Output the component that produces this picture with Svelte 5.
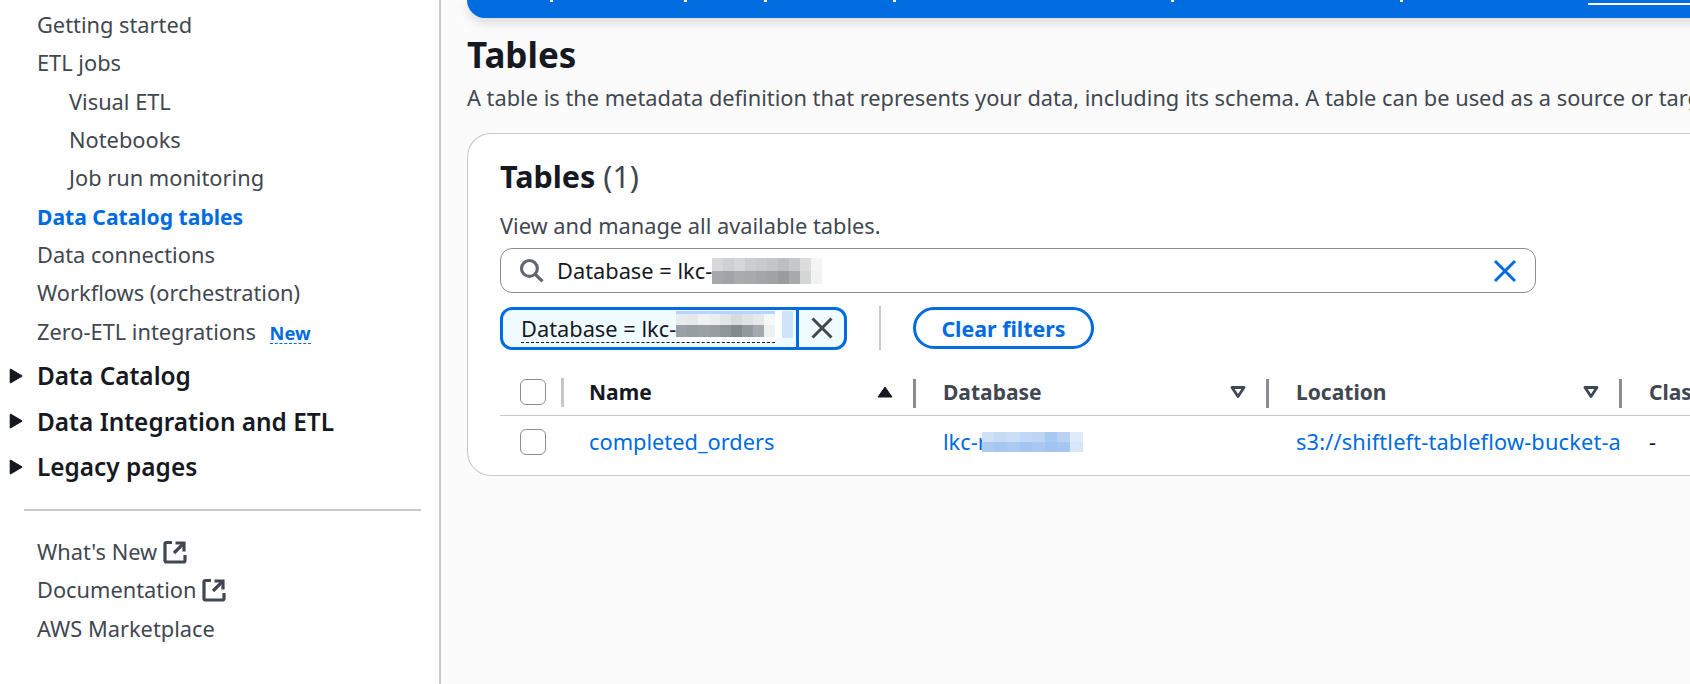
<script>
  const navTop = ['Getting started', 'ETL jobs'];
  const navSub = ['Visual ETL', 'Notebooks', 'Job run monitoring'];
  const groups = ['Data Catalog', 'Data Integration and ETL', 'Legacy pages'];
  const specks = [550, 684, 764, 893, 1171, 1400].map((x) => x - 467);
  const top = ['#d8d8da','#cfd0d2','#d6d6d8','#cdcecf','#c9cacc','#c4c5c7','#bdbec0','#c6c7c9','#dcdcdd','#f4f4f5'];
  const low = ['#a6a7a9','#a2a3a6','#a9aaac','#a8a9ab','#a4a5a7','#a1a2a4','#9a9b9e','#a8a9ab','#d4d5d6','#f2f2f3'];
  const tTop = ['#e8ebec','#e6e9ea','#eff1f2','#ebedee','#e2e5e6','#d8dbdc','#dfe2e3','#e6e8e9','#f6f7f7'];
  const tLow = ['#9aa1a6','#969da2','#9aa1a6','#979ea3','#8f969b','#828a8f','#939a9f','#a3a9ad','#eef1f2'];
  const lTop = ['#cfe0f7','#c6dbf6','#cbdef6','#c0d7f5','#bdd5f5','#a9c9f2','#b9d2f4','#dfeafa'];
  const lLow = ['#abcaf1','#a6c7f1','#abcaf1','#a3c5f0','#a7c8f1','#a0c3f0','#a4c6f0','#d9e6f9'];
</script>

<div class="page">
  <aside class="side">
    <nav class="nav">
      {#each navTop as t}<a class="item">{t}</a>{/each}
      {#each navSub as t}<a class="item sub">{t}</a>{/each}
      <a class="item active">Data Catalog tables</a>
      <a class="item">Data connections</a>
      <a class="item">Workflows (orchestration)</a>
      <a class="item">Zero-ETL integrations <span class="new">New</span></a>
    </nav>
    <div class="groups">
      {#each groups as g}
        <div class="group">
          <svg class="caret" viewBox="0 0 14 16" width="14" height="16"><path d="M1.5 1.5 L12.5 8 L1.5 14.5 Z" fill="#16191f" stroke="#16191f" stroke-width="1.6" stroke-linejoin="round"/></svg>
          <span>{g}</span>
        </div>
      {/each}
    </div>
    <hr class="rule" />
    <nav class="nav foot">
      <a class="item">What's New <svg class="ext" viewBox="0 0 24 24" width="24" height="24"><path d="M9 2.5H3.5Q2 2.500 2 4V20.500Q2 22 3.500 22H20.500Q22 22 22 20.500V15" fill="none" stroke="#414750" stroke-width="3.200"/><path d="M12.500 3H21V11.500" fill="none" stroke="#414750" stroke-width="3.200"/><path d="M20.500 3.500L11 13" fill="none" stroke="#414750" stroke-width="3.200"/></svg></a>
      <a class="item">Documentation <svg class="ext" viewBox="0 0 24 24" width="24" height="24"><path d="M9 2.5H3.5Q2 2.500 2 4V20.500Q2 22 3.500 22H20.500Q22 22 22 20.500V15" fill="none" stroke="#414750" stroke-width="3.200"/><path d="M12.500 3H21V11.500" fill="none" stroke="#414750" stroke-width="3.200"/><path d="M20.500 3.500L11 13" fill="none" stroke="#414750" stroke-width="3.200"/></svg></a>
      <a class="item">AWS Marketplace</a>
    </nav>
  </aside>

  <main class="main">
    <div class="banner">
      {#each specks as s}<span class="speck" style="left:{s}px"></span>{/each}
      <span class="banner-link"></span>
    </div>
    <h1>Tables</h1>
    <p class="desc">A table is the metadata definition that represents your data, including its schema. A table can be used as a source or target in a job definition.</p>

    <section class="card">
      <h2>Tables <span class="count">(1)</span></h2>
      <p class="sub-desc">View and manage all available tables.</p>

      <div class="search">
        <svg viewBox="0 0 24 24" width="25" height="25"><circle cx="10" cy="10" r="7.6" fill="none" stroke="#5f6670" stroke-width="3"/><path d="M15.5 15.5L22.5 22.500" stroke="#5f6670" stroke-width="3.200" fill="none"/></svg>
        <span class="search-text">Database = lkc-</span>
        <span class="blur">{#each top as c, i}<i style="background:linear-gradient({c} 50%, {low[i]} 50%)"></i>{/each}</span>
        <svg class="clear" viewBox="0 0 24 24" width="24" height="24"><path d="M2 2L22 22M22 2L2 22" stroke="#006ce0" stroke-width="3" fill="none"/></svg>
      </div>

      <div class="filters">
        <div class="token">
          <span class="token-text">
            <span class="token-label">
              <span class="token-word">Database = lkc-</span>
              <span class="blur small">{#each tTop as c, i}<i style="background:linear-gradient(#b5d6f8 3px, {c} 3px, {c} 14px, {tLow[i]} 14px, {tLow[i]} 26px, #fff 26px)"></i>{/each}</span>
            </span>
            <span class="sel-end"></span>
          </span>
          <button class="token-x" aria-label="Remove"><svg viewBox="0 0 24 24" width="24" height="24"><path d="M2.500 2.500L21.500 21.500M21.500 2.500L2.500 21.500" stroke="#414750" stroke-width="3" fill="none"/></svg></button>
        </div>
        <div class="vsep"></div>
        <button class="clear-btn">Clear filters</button>
      </div>

      <div class="table">
        <div class="row head">
          <div class="c-check"><span class="box"></span><span class="light-div"></span></div>
          <div class="c-name">
            <span class="th dark">Name</span>
            <svg viewBox="0 0 16 12" width="16" height="12"><path d="M8 1L15 11H1Z" fill="#16191f" stroke="#16191f" stroke-linejoin="round"/></svg>
            <span class="div"></span>
          </div>
          <div class="c-db">
            <span class="th">Database</span>
            <svg viewBox="0 0 16 12" width="16" height="12"><path d="M2 1.500H14L8 10.500Z" fill="none" stroke="#414750" stroke-width="2.800" stroke-linejoin="round"/></svg>
            <span class="div"></span>
          </div>
          <div class="c-loc">
            <span class="th">Location</span>
            <svg viewBox="0 0 16 12" width="16" height="12"><path d="M2 1.500H14L8 10.500Z" fill="none" stroke="#414750" stroke-width="2.800" stroke-linejoin="round"/></svg>
            <span class="div"></span>
          </div>
          <div class="c-cls"><span class="th">Classification</span></div>
        </div>
        <div class="row body">
          <div class="c-check"><span class="box"></span></div>
          <div class="c-name"><a class="link">completed_orders</a></div>
          <div class="c-db"><a class="link">lkc-r</a><span class="blur link-blur">{#each lTop as c, i}<i style="background:linear-gradient({c} 50%, {lLow[i]} 50%)"></i>{/each}</span></div>
          <div class="c-loc"><a class="link clip">s3://shiftleft-tableflow-bucket-a</a></div>
          <div class="c-cls dash">-</div>
        </div>
      </div>
    </section>
  </main>
</div>

<style>
  :global(body) { margin: 0; background: #fbfbfb; overflow: hidden; }
  * { box-sizing: border-box; }
  .page { display: flex; width: 1690px; height: 684px; overflow: hidden; font-family: "Noto Sans", sans-serif; font-size: 21.8px; color: #414750; }
  .side { width: 441px; flex: none; height: 684px; background: #fff; border-right: 2px solid #c6c6cd; padding-top: 5.5px; }
  .nav { display: flex; flex-direction: column; }
  .item { display: flex; align-items: center; height: 38.33px; padding-left: 37px; color: #414750; white-space: pre; }
  .sub { padding-left: 69px; }
  .active { color: #006ce0; font-weight: 700; font-size: 21.1px; }
  .new { color: #006ce0; font-weight: 700; font-size: 18.300px; margin-left: 8px; border-bottom: 1px dashed #006ce0; line-height: 20px; margin-top: 5px; }
  .groups { margin-top: 2.5px; }
  .group { display: flex; align-items: center; height: 45.5px; color: #16191f; font-weight: 600; font-size: 24.4px; padding-left: 9px; }
  .group span { margin-left: 14px; }
  .rule { border: 0; border-top: 2px solid #c6c6cd; margin: 20px 18px 0 24px; }
  .foot { margin-top: 21px; }
  .ext { margin-left: 0; }

  .main { flex: 1; min-width: 0; padding-left: 26px; position: relative; }
  .banner { height: 18px; width: 1300px; background: #006ce0; border-bottom-left-radius: 18px; box-shadow: 0 4px 12px rgba(0,7,22,.15); position: relative; }
  .banner-link { position: absolute; left: 1121px; top: 3px; width: 110px; height: 2px; background: #fff; }
  .speck { position: absolute; top: 0; width: 3px; height: 2px; background: #fff; }
  h1 { margin: 15px 0 0; color: #16191f; font-size: 35px; font-weight: 700; line-height: 44px; }
  .desc { margin: 6px 0 0; white-space: nowrap; line-height: 30px; }
  .card { margin-top: 20px; width: 1300px; height: 343px; background: #fff; border: 1px solid #c6c6cd; border-right: 0; border-radius: 24px 0 0 24px; padding: 24px 0 0 32px; }
  h2 { margin: 0; font-size: 30.5px; font-weight: 700; color: #16191f; line-height: 36px; }
  .count { font-weight: 400; color: #414750; }
  .sub-desc { margin: 17px 0 0; line-height: 30px; }
  .search { display: flex; align-items: center; width: 1036px; height: 45px; margin-top: 7px; border: 1.5px solid #8c8c94; border-radius: 12px; padding: 0 18px 0 18px; color: #16191f; }
  .search-text { margin-left: 13px; }
  .blur { display: inline-flex; height: 26px; }
  .blur i { width: 11px; display: block; }
  .clear { margin-left: auto; }
  .filters { display: flex; align-items: center; margin-top: 13px; }
  .token { display: flex; align-items: stretch; width: 347px; height: 43px; background: #f0fbff; border: 3px solid #006ce0; border-radius: 12px; color: #16191f; }
  .token-text { flex: 1; min-width: 0; display: flex; align-items: flex-start; padding: 1px 0 0 18px; white-space: nowrap; overflow: hidden; }
  .token-label { display: inline-flex; align-items: flex-end; height: 32px; border-bottom: 1px dashed #16191f; }
  .token-word { line-height: 26px; }
  .blur.small { height: 31px; align-self: flex-start; }
  .blur.small i { width: 11px; }
  .sel-end { width: 18px; height: 27px; flex: none; background: linear-gradient(90deg, #fff 40%, #cfe4fb 40%); }
  .token-x { width: 48px; flex: none; padding: 0; border: 0; border-left: 3px solid #006ce0; background: transparent; display: flex; align-items: center; justify-content: center; }
  .vsep { width: 2px; height: 44px; background: #c6c6cd; margin: 0 32px; }
  .clear-btn { width: 181px; height: 42px; border: 3px solid #006ce0; border-radius: 21px; background: #fff; color: #006ce0; font: 700 21.4px "Noto Sans", sans-serif; padding: 0; }
  .table { margin-top: 22px; }
  .row { display: flex; align-items: center; }
  .head { height: 44px; border-bottom: 1.5px solid #c6c6cd; }
  .body { height: 59px; padding-bottom: 8px; }
  .head > div { display: flex; align-items: center; height: 100%; padding-bottom: 3px; }
  .c-check { width: 89px; padding-left: 20px; display: flex; align-items: center; flex: none; }
  .box { width: 26px; height: 26px; border: 1.5px solid #8c8c94; border-radius: 6px; background: #fff; flex: none; display: block; }
  .light-div { width: 2.5px; height: 29px; background: #c6c6cd; margin-left: 15px; }
  .c-name { width: 354px; flex: none; }
  .c-db { width: 353px; flex: none; }
  .c-loc { width: 353px; flex: none; }
  .c-cls { white-space: nowrap; }
  .head .c-name, .head .c-db, .head .c-loc { position: relative; padding-right: 50px; justify-content: space-between; }
  .th { font-weight: 700; color: #414750; font-size: 21px; }
  .th.dark { color: #16191f; }
  .div { position: absolute; right: 27px; top: 7px; width: 3px; height: 29px; background: #8c8c94; }
  .link { color: #006ce0; }
  .clip { display: block; width: 326px; overflow: hidden; white-space: nowrap; letter-spacing: .15px; }
  .body .c-db { display: flex; align-items: center; }
  .blur.link-blur { height: 20px; margin-left: -5px; }
  .blur.link-blur i { width: 12.6px; }
  .dash { color: #16191f; }
</style>
